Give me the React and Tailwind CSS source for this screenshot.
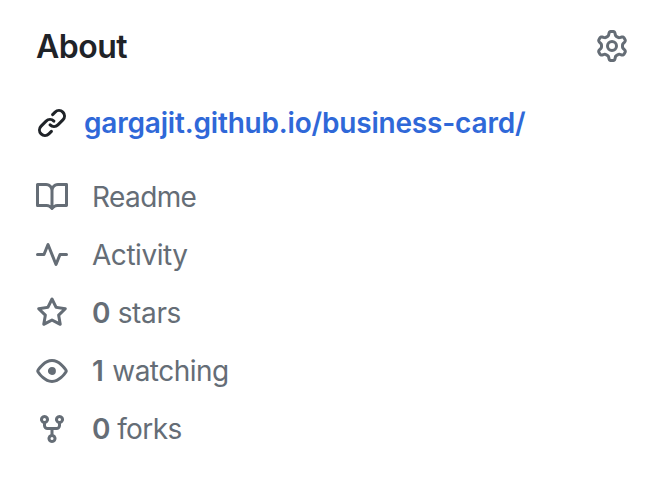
const PATHS = {
  gear: 'M8 0a8.2 8.2 0 0 1 .701.031C9.444.095 9.99.645 10.16 1.29l.288 1.107c.018.066.079.158.212.224.231.114.454.243.668.386.123.082.233.09.299.071l1.103-.303c.644-.176 1.392.021 1.82.63.27.385.506.792.704 1.218.315.675.111 1.422-.364 1.891l-.814.806c-.049.048-.098.147-.088.294.016.257.016.515 0 .772-.01.147.038.246.088.294l.814.806c.475.469.679 1.216.364 1.891a7.977 7.977 0 0 1-.704 1.217c-.428.61-1.176.807-1.82.63l-1.102-.302c-.067-.019-.177-.011-.3.071a5.909 5.909 0 0 1-.668.386c-.133.066-.194.158-.211.224l-.29 1.106c-.168.646-.715 1.196-1.458 1.26a8.006 8.006 0 0 1-1.402 0c-.743-.064-1.289-.614-1.458-1.26l-.289-1.106c-.018-.066-.079-.158-.212-.224a5.738 5.738 0 0 1-.668-.386c-.123-.082-.233-.09-.299-.071l-1.103.303c-.644.176-1.392-.021-1.82-.63a8.12 8.12 0 0 1-.704-1.218c-.315-.675-.111-1.422.363-1.891l.815-.806c.05-.048.098-.147.088-.294a6.214 6.214 0 0 1 0-.772c.01-.147-.038-.246-.088-.294l-.815-.806C.635 6.045.431 5.298.746 4.623a7.92 7.92 0 0 1 .704-1.217c.428-.61 1.176-.807 1.82-.63l1.102.302c.067.019.177.011.3-.071.214-.143.437-.272.668-.386.133-.066.194-.158.211-.224l.29-1.106C6.009.645 6.556.095 7.299.03 7.53.01 7.764 0 8 0Zm-.571 1.525c-.036.003-.108.036-.137.146l-.289 1.105c-.147.561-.549.967-.998 1.189-.173.086-.34.183-.5.29-.417.278-.97.423-1.529.27l-1.103-.303c-.109-.03-.175.016-.195.045-.22.312-.412.644-.573.99-.014.031-.021.11.059.19l.815.806c.411.406.562.957.53 1.456a4.709 4.709 0 0 0 0 .582c.032.499-.119 1.05-.53 1.456l-.815.806c-.081.08-.073.159-.059.19.162.346.353.677.573.989.02.03.085.076.195.046l1.102-.303c.56-.153 1.113-.008 1.53.27.161.107.328.204.501.29.447.222.85.629.997 1.189l.289 1.105c.029.109.101.143.137.146a6.6 6.6 0 0 0 1.142 0c.036-.003.108-.036.137-.146l.289-1.105c.147-.561.549-.967.998-1.189.173-.086.34-.183.5-.29.417-.278.97-.423 1.529-.27l1.103.303c.109.029.175-.016.195-.045.22-.313.411-.644.573-.99.014-.031.021-.11-.059-.19l-.815-.806c-.411-.406-.562-.957-.53-1.456a4.709 4.709 0 0 0 0-.582c-.032-.499.119-1.05.53-1.456l.815-.806c.081-.08.073-.159.059-.19a6.464 6.464 0 0 0-.573-.989c-.02-.03-.085-.076-.195-.046l-1.102.303c-.56.153-1.113.008-1.53-.27a4.44 4.44 0 0 0-.501-.29c-.447-.222-.85-.629-.997-1.189l-.289-1.105c-.029-.11-.101-.143-.137-.146a6.6 6.6 0 0 0-1.142 0ZM11 8a3 3 0 1 1-6 0 3 3 0 0 1 6 0ZM9.5 8a1.5 1.5 0 1 0-3.001.001A1.5 1.5 0 0 0 9.5 8Z',
  link: 'm7.775 3.275 1.25-1.25a3.5 3.5 0 1 1 4.95 4.95l-2.5 2.5a3.5 3.5 0 0 1-4.95 0 .751.751 0 0 1 .018-1.042.751.751 0 0 1 1.042-.018 1.998 1.998 0 0 0 2.83 0l2.5-2.5a2.002 2.002 0 0 0-2.83-2.83l-1.25 1.25a.751.751 0 0 1-1.042-.018.751.751 0 0 1-.018-1.042Zm-4.69 9.64a1.998 1.998 0 0 0 2.83 0l1.25-1.25a.751.751 0 0 1 1.042.018.751.751 0 0 1 .018 1.042l-1.25 1.25a3.5 3.5 0 1 1-4.95-4.95l2.5-2.5a3.5 3.5 0 0 1 4.95 0 .751.751 0 0 1-.018 1.042.751.751 0 0 1-1.042.018 1.998 1.998 0 0 0-2.83 0l-2.5 2.5a1.998 1.998 0 0 0 0 2.83Z',
  book: 'M0 1.75A.75.75 0 0 1 .75 1h4.253c1.227 0 2.317.59 3 1.501A3.743 3.743 0 0 1 11.006 1h4.245a.75.75 0 0 1 .75.75v10.5a.75.75 0 0 1-.75.75h-4.507a2.25 2.25 0 0 0-1.591.659l-.622.621a.75.75 0 0 1-1.06 0l-.622-.621A2.25 2.25 0 0 0 5.258 13H.75a.75.75 0 0 1-.75-.75Zm7.251 10.324.004-5.073-.002-2.253A2.25 2.25 0 0 0 5.003 2.5H1.5v9h3.757a3.75 3.75 0 0 1 1.994.574ZM8.755 4.75l-.004 7.322a3.752 3.752 0 0 1 1.992-.572H14.5v-9h-3.495a2.25 2.25 0 0 0-2.25 2.25Z',
  pulse: 'M6 2c.306 0 .582.187.696.471L10 10.731l1.304-3.26A.751.751 0 0 1 12 7h3.25a.75.75 0 0 1 0 1.5h-2.742l-1.812 4.528a.751.751 0 0 1-1.392 0L6 4.77 4.696 8.03A.75.75 0 0 1 4 8.5H.75a.75.75 0 0 1 0-1.5h2.742l1.812-4.529A.751.751 0 0 1 6 2Z',
  star: 'M8 .25a.75.75 0 0 1 .673.418l1.882 3.815 4.21.612a.75.75 0 0 1 .416 1.279l-3.046 2.97.719 4.192a.751.751 0 0 1-1.088.791L8 12.347l-3.766 1.98a.75.75 0 0 1-1.088-.79l.72-4.194L.818 6.374a.75.75 0 0 1 .416-1.28l4.21-.611L7.327.668A.75.75 0 0 1 8 .25Zm0 2.445L6.615 5.5a.75.75 0 0 1-.564.41l-3.097.45 2.24 2.184a.75.75 0 0 1 .216.664l-.528 3.084 2.769-1.456a.75.75 0 0 1 .698 0l2.77 1.456-.53-3.084a.75.75 0 0 1 .216-.664l2.24-2.183-3.096-.45a.75.75 0 0 1-.564-.41L8 2.694Z',
  eye: 'M8 2c1.981 0 3.671.992 4.933 2.078 1.27 1.091 2.187 2.345 2.637 3.023a1.62 1.62 0 0 1 0 1.798c-.45.678-1.367 1.932-2.637 3.023C11.67 13.008 9.981 14 8 14c-1.981 0-3.671-.992-4.933-2.078C1.797 10.83.88 9.576.43 8.898a1.62 1.62 0 0 1 0-1.798c.45-.677 1.367-1.931 2.637-3.022C4.33 2.992 6.019 2 8 2ZM1.679 7.932a.12.12 0 0 0 0 .136c.411.622 1.241 1.75 2.366 2.717C5.176 11.758 6.527 12.5 8 12.5c1.473 0 2.825-.742 3.955-1.715 1.124-.967 1.954-2.096 2.366-2.717a.12.12 0 0 0 0-.136c-.412-.621-1.242-1.75-2.366-2.717C10.824 4.242 9.473 3.5 8 3.5c-1.473 0-2.825.742-3.955 1.715-1.124.967-1.954 2.096-2.366 2.717ZM8 10a2 2 0 1 1-.001-3.999A2 2 0 0 1 8 10Z',
  fork: 'M5 5.372v.878c0 .414.336.75.75.75h4.5a.75.75 0 0 0 .75-.75v-.878a2.25 2.25 0 1 1 1.5 0v.878a2.25 2.25 0 0 1-2.25 2.25h-1.5v2.128a2.251 2.251 0 1 1-1.5 0V8.5h-1.5A2.25 2.25 0 0 1 3.5 6.25v-.878a2.25 2.25 0 1 1 1.5 0ZM5 3.25a.75.75 0 1 0-1.5 0 .75.75 0 0 0 1.5 0Zm6.75.75a.75.75 0 1 0 0-1.5.75.75 0 0 0 0 1.5Zm-3 8.75a.75.75 0 1 0-1.5 0 .75.75 0 0 0 1.5 0Z',
};

function Icon({ name, className = '' }) {
  return (
    <svg viewBox="0 0 16 16" fill="currentColor" aria-hidden="true" className={`size-8 shrink-0 ${className}`}>
      <path d={PATHS[name]} />
    </svg>
  );
}

const STATS = [
  { icon: 'book', label: 'Readme', tracking: 'tracking-[-0.6px]' },
  { icon: 'pulse', label: 'Activity', tracking: 'tracking-[-0.45px]' },
  { icon: 'star', count: '0', label: 'stars', tracking: 'tracking-[-0.35px]' },
  { icon: 'eye', count: '1', label: 'watching', tracking: 'tracking-[-0.5px]', gap: 'mr-[1.5px]' },
  { icon: 'fork', count: '0', label: 'forks', tracking: 'tracking-[-0.6px]' },
];

export default function App() {
  return (
    <aside className="h-[484px] w-[652px] overflow-hidden bg-white pt-[23px] pr-6 pl-9 font-['Inter','Liberation_Sans',sans-serif] text-[28px] text-[#656d76]">
      <header className="flex h-12 items-start justify-between">
        <h2 className="text-[32px] leading-[48px] font-semibold tracking-[-0.5px] text-[#1f2328]">About</h2>
        <Icon name="gear" className="mt-[7px]" />
      </header>
      <div className="mt-8 flex h-10 items-center gap-4 text-[#1f2328]">
        <Icon name="link" />
        <a href="#" className="leading-10 font-semibold tracking-[-0.19px] whitespace-nowrap text-[#2f68d8]">
          gargajit.github.io/business-card/
        </a>
      </div>
      <ul className="mt-[25px]">
        {STATS.map(({ icon, count, label, tracking, gap = '' }) => (
          <li key={icon} className="flex h-[58px] items-center gap-6">
            <Icon name={icon} />
            <span className={`leading-[58px] whitespace-nowrap ${tracking}`}>
              {count && <strong className={`font-semibold ${gap}`}>{count}</strong>}
              {count && ' '}
              {label}
            </span>
          </li>
        ))}
      </ul>
    </aside>
  );
}
